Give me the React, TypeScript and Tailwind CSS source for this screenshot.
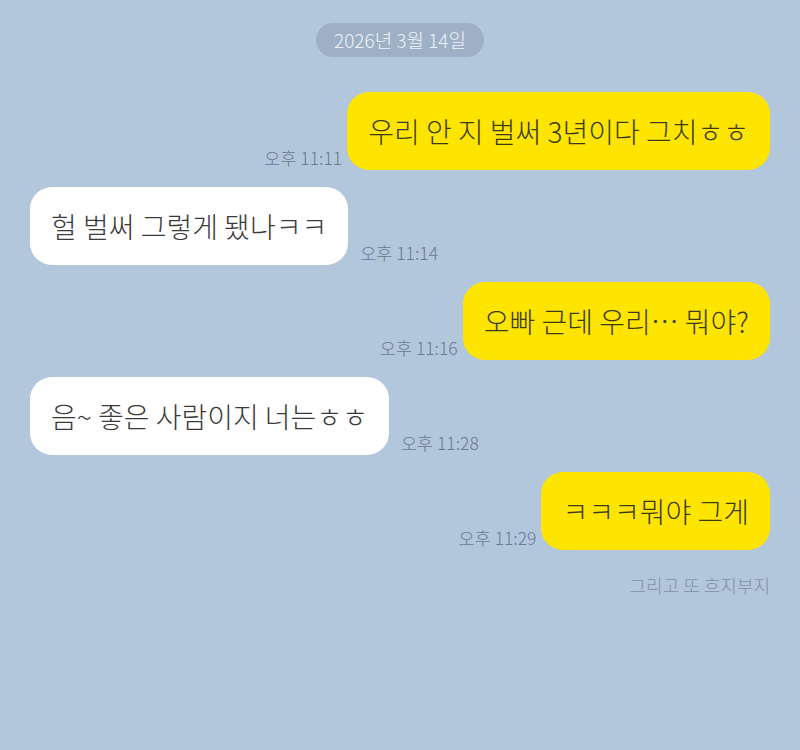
import React from "react";

type Msg = {
  mine: boolean;
  text: string;
  time: string;
};

const messages: Msg[] = [
  { mine: true, text: "우리 안 지 벌써 3년이다 그치ㅎㅎ", time: "오후 11:11" },
  { mine: false, text: "헐 벌써 그렇게 됐나ㅋㅋ", time: "오후 11:14" },
  { mine: true, text: "오빠 근데 우리… 뭐야?", time: "오후 11:16" },
  { mine: false, text: "음~ 좋은 사람이지 너는ㅎㅎ", time: "오후 11:28" },
  { mine: true, text: "ㅋㅋㅋ뭐야 그게", time: "오후 11:29" },
];

const font = "font-['Noto_Sans_CJK_KR','Noto_Sans',sans-serif]";

function Bubble({ msg }: { msg: Msg }) {
  const bubble = (
    <div
      className={`rounded-[22px] px-[21px] py-[21px] text-[28px] leading-[36px] font-extralight whitespace-nowrap ${
        msg.mine ? "bg-[#fee500] text-[#3d3a1c]" : "bg-white text-[#3a3a3a]"
      }`}
    >
      {msg.text}
    </div>
  );
  const time = (
    <span className="text-[17.5px] leading-[20px] font-extralight text-[#6b7a8d] whitespace-nowrap pb-[2px]">
      {msg.time}
    </span>
  );

  return (
    <div className={`flex items-end gap-[5px] ${msg.mine ? "justify-end" : "justify-start"}`}>
      {msg.mine ? (
        <>
          {time}
          {bubble}
        </>
      ) : (
        <>
          {bubble}
          <span className="ml-[7px]">{time}</span>
        </>
      )}
    </div>
  );
}

export default function App() {
  return (
    <div className={`w-[800px] h-[750px] bg-[#b2c6dc] ${font} px-[30px] pt-[23px]`}>
      <div className="flex justify-center">
        <div className="rounded-full bg-[#9db0c5] px-[18px] h-[34px] flex items-center text-[19px] font-extralight text-[#eef2f7]">
          2026년 3월 14일
        </div>
      </div>

      <div className="mt-[35px] flex flex-col gap-[17px]">
        {messages.map((m, i) => (
          <Bubble key={i} msg={m} />
        ))}
      </div>

      <div className="mt-[22px] flex justify-end text-[18px] font-extralight text-[#8290a2]">
        그리고 또 흐지부지
      </div>
    </div>
  );
}
